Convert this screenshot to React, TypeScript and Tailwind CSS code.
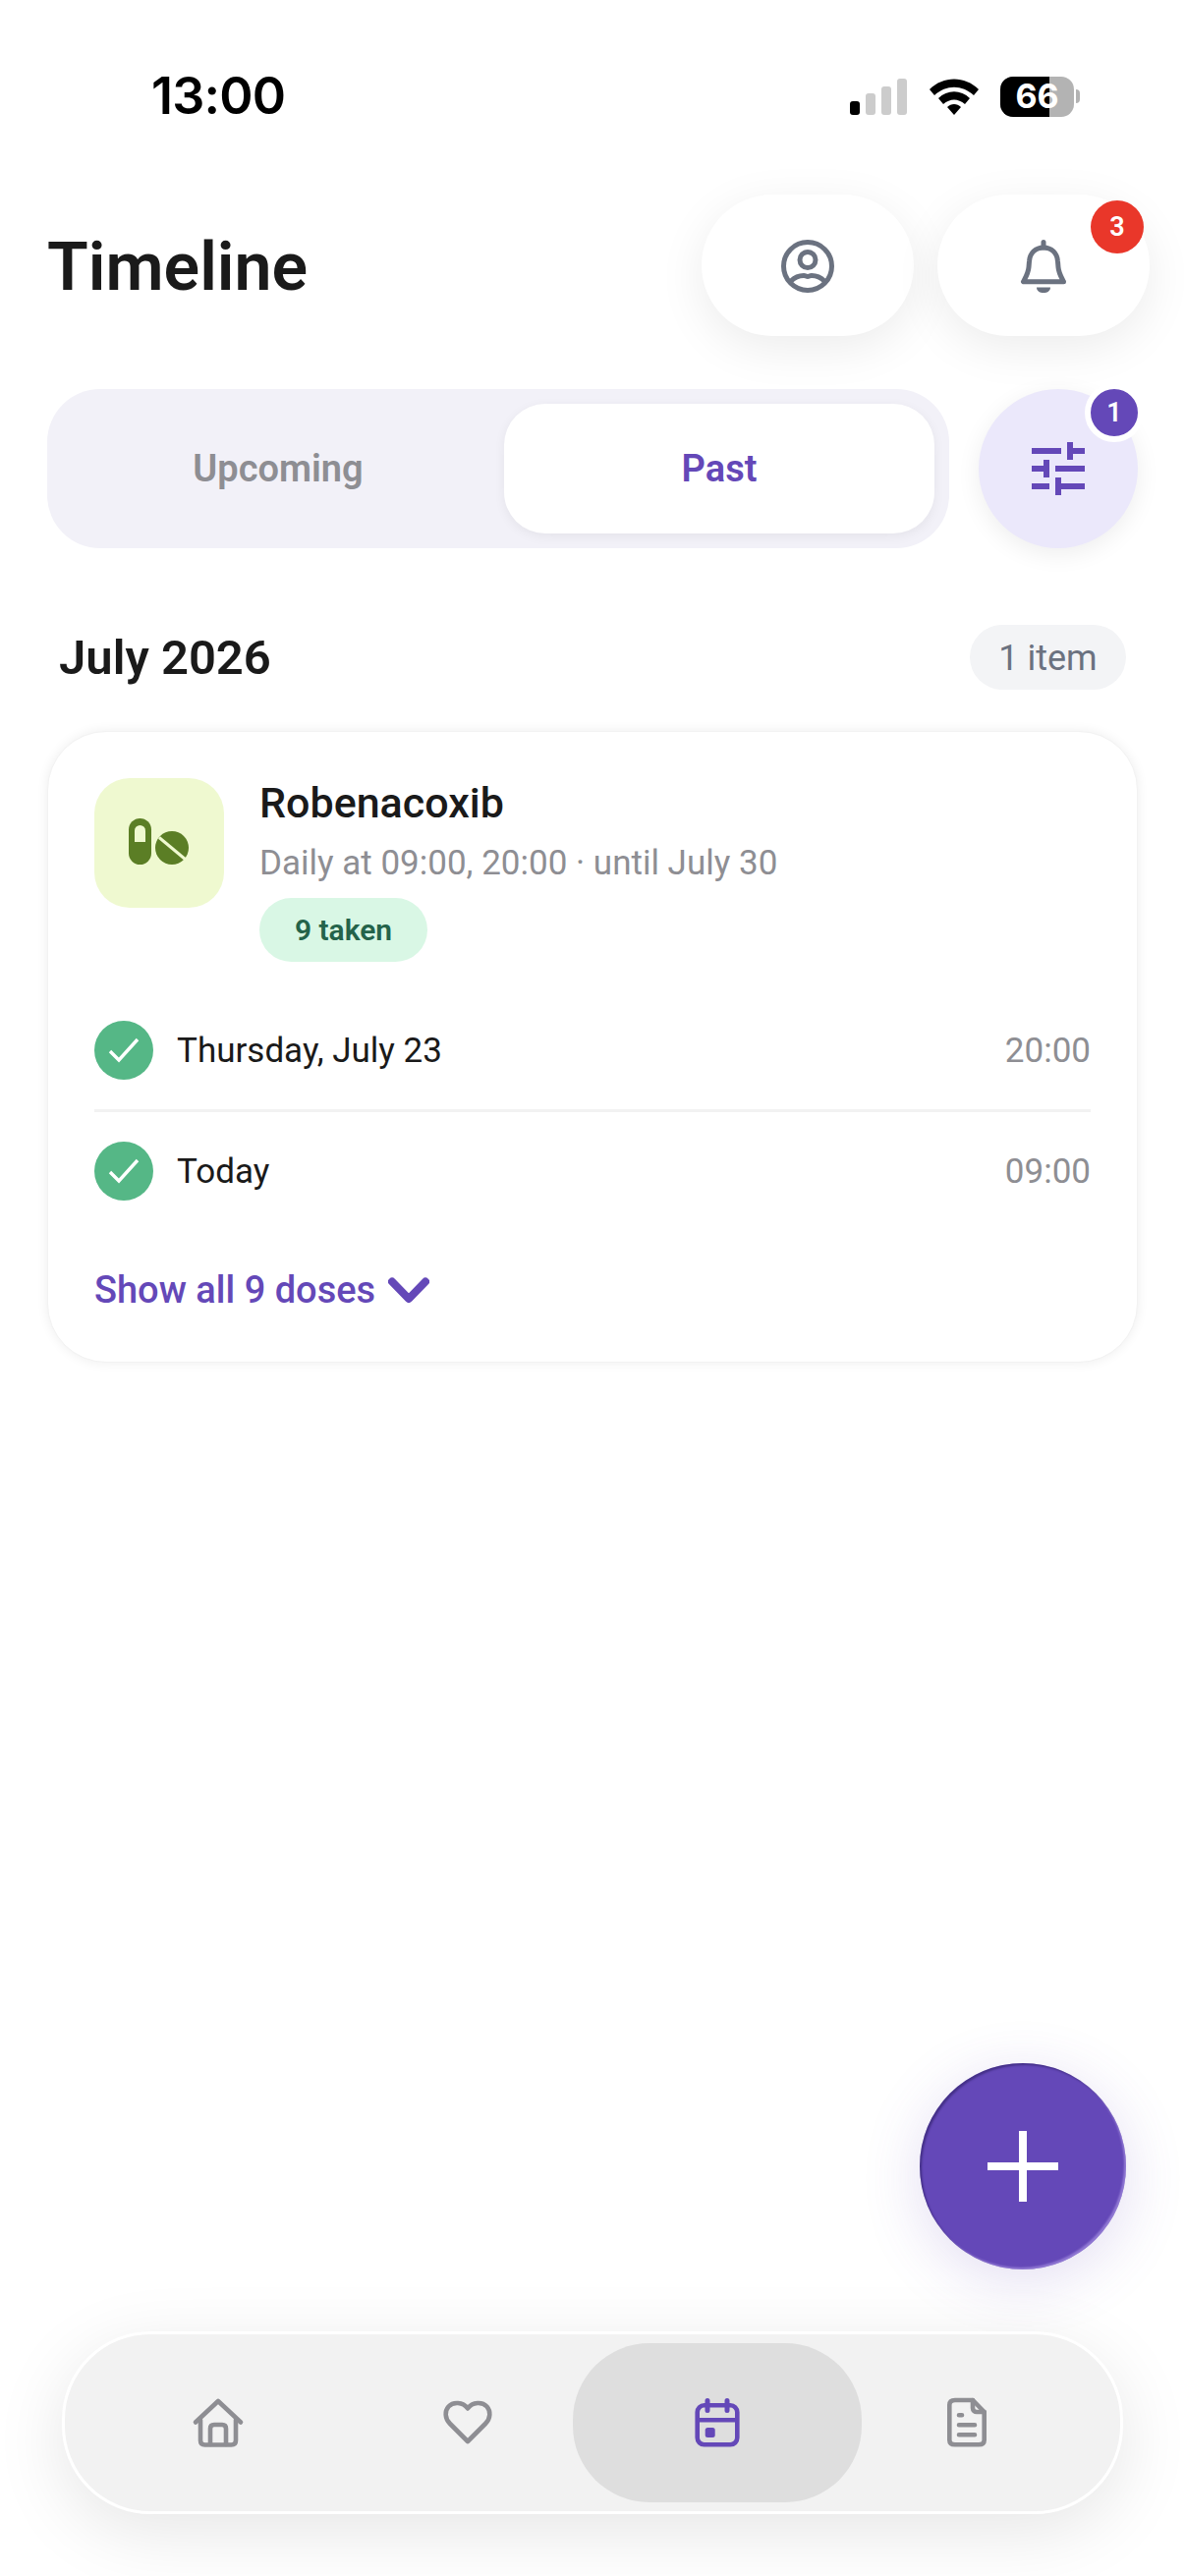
import React from "react";

function Check() {
  return (
    <div className="w-[60px] h-[60px] rounded-full bg-[#55b786] flex items-center justify-center shrink-0">
      <svg width="32" height="26" viewBox="0 0 32 26" fill="none">
        <path d="M2 14 L11 23 L30 2" stroke="#fff" strokeWidth="3.4" />
      </svg>
    </div>
  );
}

function Dose({ label, time }: { label: string; time: string }) {
  return (
    <div className="flex items-center h-[60px]">
      <Check />
      <span className="ml-[24px] pt-[3px] text-[35px] text-[#1a1a1a]">{label}</span>
      <span className="ml-auto pt-[3px] text-[35px] text-[#8e8e93]">{time}</span>
    </div>
  );
}

const navIcon = "fill-none stroke-current";

export default function App() {
  return (
    <div className="relative w-[1206px] h-[2622px] bg-white overflow-hidden font-['Roboto',sans-serif]">
      {/* status bar */}
      <div className="flex items-center h-[198px] pl-[154px] pr-[107px] pb-[82px] pt-[80px]">
        <span className="text-[52px] font-semibold text-black leading-none font-['Inter',sans-serif] tracking-[-0.8px]">13:00</span>
        <div className="ml-auto flex items-end gap-[6px] h-[37px]">
          <div className="w-[10px] h-[14px] rounded-[3px] bg-black" />
          <div className="w-[10px] h-[22px] rounded-[3px] bg-[#cccccc]" />
          <div className="w-[10px] h-[29px] rounded-[3px] bg-[#cccccc]" />
          <div className="w-[10px] h-[37px] rounded-[3px] bg-[#cccccc]" />
        </div>
        <svg className="ml-[23px]" width="50" height="37" viewBox="0 0 50 37">
          <path d="M0 11 C14 -3 36 -3 50 11 L45 17 C33 6 17 6 5 17Z" fill="#000" />
          <path d="M9 20 C18 11 32 11 41 20 L36 26 C29 20 21 20 14 26Z" fill="#000" />
          <path d="M18 29 C22 25 28 25 32 29 L25 37Z" fill="#000" />
        </svg>
        <div className="ml-[22px] relative w-[75px] h-[41px] rounded-[13px] overflow-hidden flex bg-[#b3b3b3]">
          <div className="w-[50px] h-full bg-black" />
          <span className="absolute inset-0 flex items-center justify-center text-white text-[34px] font-bold font-['Inter',sans-serif] leading-none">66</span>
        </div>
        <div className="ml-[2px] w-[4px] h-[14px] rounded-r-[4px] bg-[#b3b3b3]" />
      </div>

      {/* header */}
      <div className="flex items-center h-[144px] pl-[48px] pr-[36px]">
        <h1 className="text-[68px] font-semibold text-[#1a1a1a] leading-none mt-[3px]">Timeline</h1>
        <div className="ml-auto flex gap-[24px]">
          <button className="w-[216px] h-[144px] rounded-full bg-white shadow-[0_12px_48px_rgba(0,0,0,0.08)] flex items-center justify-center">
            <svg width="54" height="54" viewBox="0 0 54 54" fill="none" stroke="#6b7280" strokeWidth="5" className="mt-[2px]">
              <circle cx="27" cy="27" r="24.5" />
              <circle cx="27" cy="20.5" r="8" />
              <path d="M10 42 C14 38 19 36.5 23 36.5 C25 36.5 25.5 37.5 27 37.5 C28.5 37.5 29 36.5 31 36.5 C35 36.5 40 38 44 42" />
            </svg>
          </button>
          <button className="relative w-[216px] h-[144px] rounded-full bg-white shadow-[0_12px_48px_rgba(0,0,0,0.08)] flex items-center justify-center">
            <svg width="54" height="54" viewBox="0 0 54 54" fill="none" stroke="#6b7280" strokeWidth="5" strokeLinejoin="round" strokeLinecap="round" className="mt-[2px]">
              <path d="M27 2.5 V8" />
              <path d="M27 8 C19 8 13 13.5 12.5 22 L12 28 C11.5 34 9 38 6.5 42.7 H47.5 C45 38 42.5 34 42 28 L41.5 22 C41 13.5 35 8 27 8 Z" />
              <path d="M20 48.5 H34 C34 56 20 56 20 48.5 Z" fill="#6b7280" stroke="none" />
            </svg>
            <span className="absolute top-[6px] right-[6px] w-[54px] h-[54px] rounded-full bg-[#e9372a] text-white text-[27px] font-semibold flex items-center justify-center">3</span>
          </button>
        </div>
      </div>

      {/* segmented + filter */}
      <div className="flex items-center mt-[54px] pl-[48px] pr-[48px]">
        <div className="w-[918px] h-[162px] rounded-[54px] bg-[#f2f1f8] flex items-center p-[15px]">
          <div className="flex-1 text-center text-[38px] font-semibold text-[#8e8e93] pr-[10px]">Upcoming</div>
          <div className="w-[438px] h-[132px] rounded-[42px] bg-white shadow-[0_3px_12px_rgba(0,0,0,0.06)] flex items-center justify-center text-[38px] font-semibold text-[#6448b8]">Past</div>
        </div>
        <button className="relative ml-auto w-[162px] h-[162px] rounded-full bg-[#ebe8fb] shadow-[0_6px_24px_rgba(0,0,0,0.07)] flex items-center justify-center">
          <svg width="54" height="54" viewBox="0 0 54 54" fill="#6448b8">
            <rect x="0" y="6" width="30" height="6" />
            <rect x="36" y="0" width="6" height="18" />
            <rect x="42" y="6" width="12" height="6" />
            <rect x="0" y="24" width="12" height="6" />
            <rect x="12" y="18" width="6" height="18" />
            <rect x="24" y="24" width="30" height="6" />
            <rect x="0" y="42" width="18" height="6" />
            <rect x="24" y="36" width="6" height="18" />
            <rect x="30" y="42" width="24" height="6" />
          </svg>
          <span className="absolute top-[-6px] right-[-6px] w-[60px] h-[60px] rounded-full bg-[#6448b8] border-[6px] border-white text-white text-[27px] font-semibold flex items-center justify-center">1</span>
        </button>
      </div>

      {/* month heading */}
      <div className="flex items-center justify-between mt-[78px] pl-[60px] pr-[60px]">
        <h2 className="text-[49px] font-semibold text-[#1a1a1a] leading-none mt-[1px]">July 2026</h2>
        <span className="h-[66px] w-[159px] rounded-full bg-[#f3f4f6] text-[#6b7280] text-[36px] pt-[1px] flex items-center justify-center">1 item</span>
      </div>

      {/* card */}
      <div className="mx-[48px] mt-[42px] h-[643px] rounded-[60px] bg-white border border-[#f2f2f2] shadow-[0_0_12px_rgba(0,0,0,0.07)] px-[47px] pt-[47px]">
        <div className="flex">
          <div className="w-[132px] h-[132px] rounded-[36px] bg-[#eff9d0] flex items-center justify-center shrink-0">
            <svg width="66" height="54" viewBox="0 0 66 54">
              <rect x="2" y="2" width="23" height="47" rx="11.5" fill="#5b7e25" />
              <path d="M8 26 V14.5 A5.5 5.5 0 0 1 19 14.5 V26 Z" fill="#eff9d0" />
              <circle cx="46" cy="32" r="17" fill="#5b7e25" />
              <path d="M33 21.5 L60 44" stroke="#eff9d0" strokeWidth="3" />
            </svg>
          </div>
          <div className="ml-[36px] flex flex-col items-start">
            <div className="text-[43px] font-medium text-[#1a1a1a] leading-[50px]">Robenacoxib</div>
            <div className="mt-[17px] text-[35px] text-[#8e8e93] leading-[40px]">Daily at 09:00, 20:00 · until July 30</div>
            <span className="mt-[15px] h-[65px] w-[171px] rounded-full bg-[#d9f7e5] text-[#24634a] text-[30px] font-semibold flex items-center justify-center">9 taken</span>
          </div>
        </div>
        <div className="mt-[60px]">
          <Dose label="Thursday, July 23" time="20:00" />
          <div className="h-[3px] bg-[#f2f2f2] mt-[30px] mb-[30px]" />
          <Dose label="Today" time="09:00" />
        </div>
        <div className="mt-[72px] flex items-center text-[#6448b8] text-[38px] font-medium leading-none">
          Show all 9 doses
          <svg className="ml-[13px]" width="42" height="27" viewBox="0 0 42 27" fill="none">
            <path d="M4 4.5 L21 22 L38 4.5" stroke="#6448b8" strokeWidth="8" strokeLinecap="round" strokeLinejoin="round" />
          </svg>
        </div>
      </div>

      {/* FAB */}
      <button className="absolute left-[936px] top-[2100px] w-[210px] h-[210px] rounded-full bg-[#6448b8] shadow-[0_12px_60px_rgba(100,72,184,0.18),inset_2px_2px_2px_rgba(30,20,80,0.45),inset_-2px_-2px_2px_rgba(190,170,240,0.5)] flex items-center justify-center">
        <svg width="72" height="72" viewBox="0 0 72 72" fill="#fff">
          <rect x="32" y="0" width="8" height="72" />
          <rect x="0" y="32" width="72" height="8" />
        </svg>
      </button>

      {/* nav */}
      <nav className="absolute left-[63px] top-[2373px] w-[1080px] h-[186px] rounded-[90px] bg-[#f2f2f2] border-[3px] border-white shadow-[0_18px_72px_rgba(0,0,0,0.1)]">
        <div className="absolute left-[517px] top-[9px] w-[294px] h-[162px] rounded-[78px] bg-[#dedede]" />
        <div className="absolute inset-0 grid grid-cols-4 px-[29px]">
          <div className="flex items-center justify-center text-[#8e8e93]">
            <svg className={navIcon} width="60" height="60" viewBox="0 0 60 60" strokeWidth="4.6" strokeLinejoin="round" strokeLinecap="round">
              <path d="M7 29.5 L30 8 L53 29.5" />
              <path d="M12 27 V48 C12 51 13.5 52.5 16.5 52.5 H43.5 C46.5 52.5 48 51 48 48 V27" />
              <path d="M22 52 V36 C22 33.5 23.5 32 26 32 H34 C36.5 32 38 33.5 38 36 V52" />
            </svg>
          </div>
          <div className="flex items-center justify-center text-[#8e8e93]">
            <svg className={navIcon} width="60" height="60" viewBox="0 0 60 60" strokeWidth="4.6" strokeLinejoin="round">
              <path d="M30 49 L12 31 C6.5 25.5 6.5 18 10.5 13.5 C15 8.5 25 8.5 30 15.5 C35 8.5 45 8.5 49.5 13.5 C53.5 18 53.5 25.5 48 31 Z" />
            </svg>
          </div>
          <div className="flex items-center justify-center text-[#6448b8]">
            <svg className={navIcon} width="60" height="60" viewBox="0 0 60 60" strokeWidth="4.6">
              <rect x="9.7" y="12.3" width="40.6" height="40" rx="7" />
              <path d="M9.7 27.3 H50.3" />
              <path d="M20 7.5 V17.5 M40 7.5 V17.5" strokeLinecap="round" strokeWidth="5" />
              <rect x="17.7" y="35" width="10" height="10" rx="2.5" fill="currentColor" stroke="none" />
            </svg>
          </div>
          <div className="flex items-center justify-center text-[#8e8e93]">
            <svg className={navIcon} width="60" height="60" viewBox="0 0 60 60" strokeWidth="4.6" strokeLinejoin="round" strokeLinecap="round">
              <path d="M36 7 H18 C14 7 12.3 9 12.3 12 V47.5 C12.3 50.5 14 52.3 18 52.3 H42 C46 52.3 47.7 50.5 47.7 47.5 V19 Z" />
              <path d="M36 7 V15 C36 17.5 38 19 40 19 H47.7" />
              <path d="M22 22.3 H25 M22 32.3 H38 M22 42.3 H38" />
            </svg>
          </div>
        </div>
      </nav>
    </div>
  );
}
